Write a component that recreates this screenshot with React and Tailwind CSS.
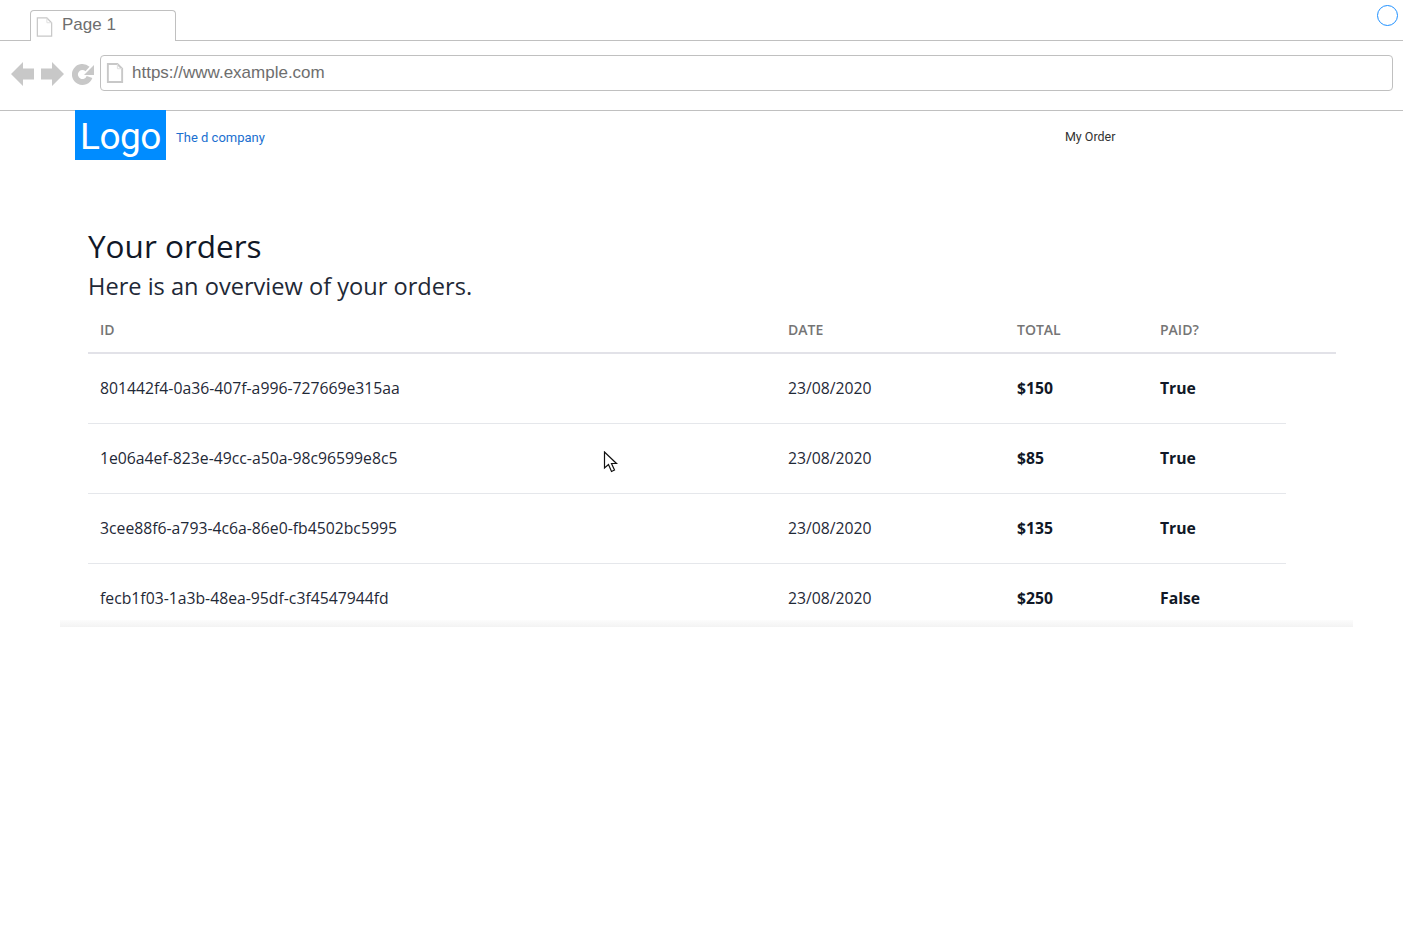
import React from "react";

const orders = [
  { id: "801442f4-0a36-407f-a996-727669e315aa", date: "23/08/2020", total: "$150", paid: "True" },
  { id: "1e06a4ef-823e-49cc-a50a-98c96599e8c5", date: "23/08/2020", total: "$85", paid: "True" },
  { id: "3cee88f6-a793-4c6a-86e0-fb4502bc5995", date: "23/08/2020", total: "$135", paid: "True" },
  { id: "fecb1f03-1a3b-48ea-95df-c3f4547944fd", date: "23/08/2020", total: "$250", paid: "False" },
];

const PageIcon = ({ className, weight = 1.3 }) => (
  <svg viewBox="0 0 17 21" className={className} fill="none">
    <path d="M1 1H11L16 6V20H1Z" fill="#fff" stroke="#c8c8c8" strokeWidth={weight} />
    <path d="M11 1V6H16" stroke="#dedede" strokeWidth="1" />
  </svg>
);

const App = () => {
  return (
    <div className="relative min-h-[951px] bg-white font-['Open_Sans',sans-serif]">
      {/* Browser chrome */}
      <div className="flex h-[41px] border-b border-[#c0c0c0] pl-[30px] font-['Liberation_Sans',sans-serif]">
        <div className="-mb-px mt-[10px] flex h-[31px] w-[146px] gap-[9px] rounded-t border border-b-0 border-[#c0c0c0] bg-white pl-[5px] pt-[5px]">
          <PageIcon className="mt-[1px] h-[20px] w-[17px]" />
          <span className="text-[17px] leading-[18px] text-[#6e6e6e]">Page 1</span>
        </div>
        <div className="ml-auto mr-[5px] mt-[5px] h-[21px] w-[21px] rounded-full border-[1.5px] border-[#1e90ff]" />
      </div>
      <div className="flex h-[70px] items-start border-b border-[#c0c0c0] pl-[11px] pr-[10px] pt-[14px] font-['Liberation_Sans',sans-serif]">
        <div className="mt-[7px] flex w-[89px] gap-[7px]">
          <svg viewBox="0 0 23 24" className="h-[24px] w-[23px]" fill="#c8c8c8">
            <path d="M0 12L12 0V6.500H23V17.500H12V24Z" />
          </svg>
          <svg viewBox="0 0 23 24" className="h-[24px] w-[23px]" fill="#c8c8c8">
            <path d="M23 12L11 0V6.500H0V17.500H11V24Z" />
          </svg>
          <svg viewBox="0 0 22 23" className="ml-px mt-[1px] h-[23px] w-[22px] shrink-0" fill="none">
            <path d="M17.500 14A7.500 7.500 0 1 1 15.500 6" stroke="#c8c8c8" strokeWidth="6" />
            <path d="M22 2V12H12Z" fill="#c8c8c8" />
          </svg>
        </div>
        <div className="flex h-[36px] flex-1 items-center gap-[8px] rounded border border-[#c0c0c0] pl-[5px]">
          <PageIcon className="h-[20px] w-[18px]" weight={2} />
          <span className="text-[17px] text-[#6e6e6e]">https://www.example.com</span>
        </div>
      </div>

      {/* Header */}
      <header className="-mt-px flex h-[50px] pl-[75px] font-['Roboto',sans-serif]">
        <div className="flex w-[91px] items-center justify-center bg-[#008cff] pt-[3px] text-[37px] tracking-[-0.5px] text-white">
          Logo
        </div>
        <span className="ml-[10px] self-center pt-[5px] text-[13px] text-[#1a6fd0]">The d company</span>
        <span className="ml-[800px] self-center pt-[4px] text-[12.500px] text-[#333]">My Order</span>
      </header>

      {/* Orders */}
      <main className="ml-[60px] mt-[61px] w-[1293px]">
        <div className="h-[399px] overflow-hidden pl-[28px] pr-[17px] pt-[5px]">
          <h1 className="text-[31.500px] leading-[40px] text-[#111827]">Your orders</h1>
          <p className="text-[23.600px] leading-[40px] text-[#1f2937]">Here is an overview of your orders.</p>
          <div className="mt-[14px] grid h-[34px] grid-cols-[688px_229px_143px_1fr] border-b-2 border-[#e2e2e8] text-[14px] font-semibold leading-[19px] text-[#757575]">
            <div className="pl-3">ID</div>
            <div className="pl-3">DATE</div>
            <div className="pl-3">TOTAL</div>
            <div className="pl-3">PAID?</div>
          </div>
          {orders.map((order) => (
            <div
              key={order.id}
              className="grid h-[70px] w-[1198px] grid-cols-[688px_229px_143px_1fr] items-center border-b border-[#e5e7eb] pt-px text-[15.750px] text-[#1f2937]"
            >
              <div className="pl-3">{order.id}</div>
              <div className="pl-3">{order.date}</div>
              <div className="pl-3 font-bold text-[#111827]">{order.total}</div>
              <div className="pl-3 font-bold text-[#111827]">{order.paid}</div>
            </div>
          ))}
        </div>
        <div className="h-[7px] bg-gradient-to-b from-[#fcfcfc] to-[#f3f3f3]" />
      </main>

      {/* Mouse pointer */}
      <svg viewBox="0 0 15 22" className="absolute left-[603px] top-[451px] h-[22px] w-[15px]" fill="#fff" stroke="#111" strokeWidth="1.200">
        <path d="M1.500 1V17L5.500 13.500L8.500 20.500L11.500 19L8.500 12.500H13.500Z" />
      </svg>
    </div>
  );
};

export default App;
